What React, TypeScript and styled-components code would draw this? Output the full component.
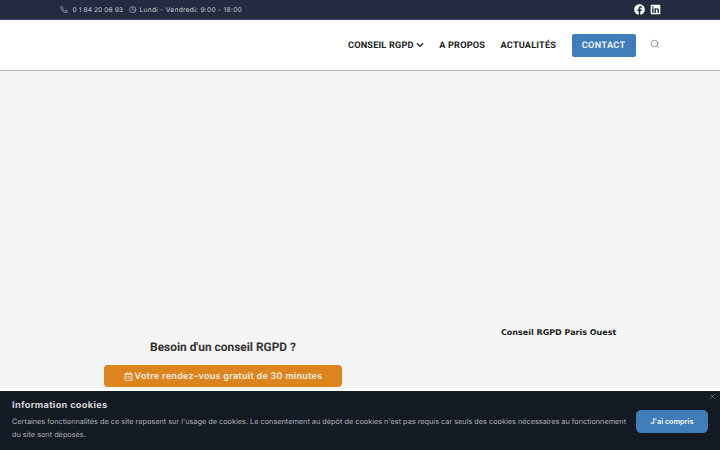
import styled, { createGlobalStyle } from "styled-components";
import { FaFacebook, FaLinkedin, FaRegCalendarAlt, FaChevronDown } from "react-icons/fa";
import { FiPhone, FiClock, FiSearch, FiX } from "react-icons/fi";

const GlobalStyle = createGlobalStyle`
    html, body {
        margin: 0;
        padding: 0;
        height: 450px;
        overflow: hidden;
        background: #ffffff;
        font-family: "Inter", "Open Sans", sans-serif;
        text-rendering: geometricPrecision;
    }
    * {
        box-sizing: border-box;
    }
`;

const TopBar = styled.div`
    height: 20px;
    padding: 0 59px 0 60px;
    display: flex;
    align-items: center;
    justify-content: space-between;
    background-color: #232b40;
    border-bottom: 1px solid #3a4a78;
`;

const TopInfo = styled.div`
    display: flex;
    align-items: center;
    color: #c3c6cf;
    font-size: 6.6px;
`;

const TopItem = styled.span<{ $gap: number; $spacing: number }>`
    display: flex;
    align-items: center;
    gap: ${props => props.$gap}px;
    margin-right: 6px;
    letter-spacing: ${props => props.$spacing}px;
    white-space: nowrap;
    svg {
        width: 7.5px;
        height: 7.5px;
    }
`;

const Socials = styled.div`
    display: flex;
    align-items: center;
    gap: 5px;
    color: #ffffff;
    svg {
        width: 11px;
        height: 11px;
    }
`;

const Header = styled.header`
    height: 51px;
    padding: 0 60px 0 348px;
    display: flex;
    align-items: center;
    background-color: #ffffff;
    border-bottom: 1px solid #b9b9b9;
`;

const NavItem = styled.a`
    display: flex;
    flex: none;
    align-items: center;
    gap: 2px;
    margin-right: 15.5px;
    font-family: "Roboto", sans-serif;
    font-size: 9.2px;
    font-weight: 700;
    letter-spacing: 0.17px;
    color: #222;
    white-space: nowrap;
    svg {
        width: 8px;
        height: 8px;
    }
`;

const ContactButton = styled.a`
    width: 64px;
    height: 23px;
    flex: none;
    display: flex;
    align-items: center;
    justify-content: center;
    margin-right: 14.5px;
    border-radius: 2px;
    background-color: #3f7cb8;
    color: #e8f0f8;
    font-family: "Roboto", sans-serif;
    font-size: 9.2px;
    font-weight: 700;
    letter-spacing: 0.3px;
`;

const SearchIcon = styled(FiSearch)`
    width: 10px;
    height: 10px;
    flex: none;
    margin-top: -2px;
    color: #666;
    stroke-width: 1.5;
`;

const Main = styled.main`
    height: 318px;
    padding: 0 0 0 104px;
    display: flex;
    align-items: flex-start;
    background-color: #f5f5f5;
`;

const CallColumn = styled.section`
    width: 238px;
    padding-top: 269px;
    display: flex;
    flex-direction: column;
    align-items: center;
`;

const CallTitle = styled.h2`
    margin: 0 0 10px;
    font-family: "Roboto", sans-serif;
    font-size: 11.9px;
    line-height: 15px;
    font-weight: 700;
    color: #333;
`;

const CallButton = styled.a`
    width: 238px;
    height: 22px;
    display: flex;
    align-items: center;
    justify-content: center;
    gap: 2px;
    border-radius: 4px;
    background-color: #dc8420;
    color: #f6eee2;
    font-size: 9.05px;
    font-weight: 600;
    letter-spacing: 0.28px;
    white-space: nowrap;
    svg {
        width: 9px;
        height: 9px;
    }
`;

const OfficeColumn = styled.section`
    padding: 256px 0 0 159px;
`;

const OfficeName = styled.div`
    font-family: "DejaVu Sans", sans-serif;
    font-size: 8px;
    line-height: 11px;
    font-weight: 700;
    color: #1c1c1c;
    white-space: nowrap;
`;

const CookieBanner = styled.aside`
    position: fixed;
    left: 0;
    right: 0;
    bottom: 0;
    height: 59px;
    padding: 1px 12px 0;
    display: flex;
    align-items: center;
    gap: 6px;
    background-color: #141a24;
    color: #aeb0b5;
`;

const CookieText = styled.div`
    flex: 1;
`;

const CookieTitle = styled.div`
    margin-bottom: 4px;
    font-size: 9.2px;
    line-height: 12px;
    font-weight: 700;
    letter-spacing: 0.32px;
    color: #d4d5d8;
`;

const CookieBody = styled.p`
    margin: 0;
    font-size: 7.32px;
    line-height: 12.8px;
`;

const AcceptButton = styled.button`
    width: 72px;
    height: 23px;
    flex: none;
    border: none;
    border-radius: 5px;
    background-color: #3f7cb8;
    color: #e8eef5;
    font-family: inherit;
    font-size: 7.2px;
    font-weight: 700;
`;

const CloseIcon = styled(FiX)`
    position: absolute;
    top: 2px;
    right: 4px;
    width: 7px;
    height: 7px;
    color: #8b8e95;
`;

export default function App() {
    return (
        <>
            <GlobalStyle />
            <TopBar>
                <TopInfo>
                    <TopItem $gap={5} $spacing={0.1}><FiPhone />0 1 84 20 06 93</TopItem>
                    <TopItem $gap={3} $spacing={0.3}><FiClock />Lundi - Vendredi: 9:00 - 18:00</TopItem>
                </TopInfo>
                <Socials>
                    <FaFacebook />
                    <FaLinkedin />
                </Socials>
            </TopBar>
            <Header>
                <NavItem>CONSEIL RGPD <FaChevronDown /></NavItem>
                <NavItem>A PROPOS</NavItem>
                <NavItem>ACTUALITÉS</NavItem>
                <ContactButton>CONTACT</ContactButton>
                <SearchIcon />
            </Header>
            <Main>
                <CallColumn>
                    <CallTitle>Besoin d'un conseil RGPD ?</CallTitle>
                    <CallButton><FaRegCalendarAlt />Votre rendez-vous gratuit de 30 minutes</CallButton>
                </CallColumn>
                <OfficeColumn>
                    <OfficeName>Conseil RGPD Paris Ouest</OfficeName>
                </OfficeColumn>
            </Main>
            <CookieBanner>
                <CookieText>
                    <CookieTitle>Information cookies</CookieTitle>
                    <CookieBody>
                        Certaines fonctionnalités de ce site reposent sur l'usage de cookies. Le consentement au dépôt de cookies n'est pas requis car seuls des cookies nécessaires au fonctionnement du site sont déposés.
                    </CookieBody>
                </CookieText>
                <AcceptButton>J'ai compris</AcceptButton>
                <CloseIcon />
            </CookieBanner>
        </>
    );
}
